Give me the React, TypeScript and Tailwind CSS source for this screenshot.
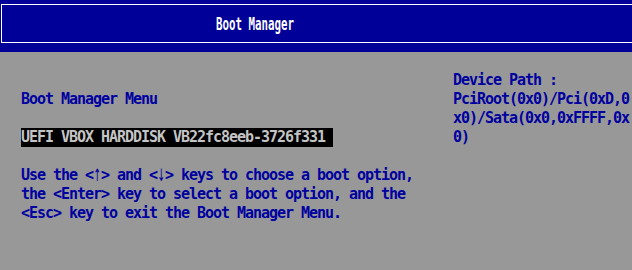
import React from "react";

function Row({ children, className = "" }: { children?: React.ReactNode; className?: string }) {
  return <div className={`h-[19px] leading-[19px] whitespace-pre ${className}`}>{children}</div>;
}

function Arrow({ c }: { c: string }) {
  return (
    <span className="inline-flex w-[8px] h-[19px] align-top justify-center overflow-visible tracking-normal font-normal font-['DejaVu_Sans','Noto_Sans',sans-serif] text-[17px] leading-[18px]">
      <span className="inline-block scale-x-[0.55]">{c}</span>
    </span>
  );
}

export default function App() {
  return (
    <div className="w-[632px] h-[270px] overflow-hidden bg-[#989898] text-[15px] font-bold tracking-[-1.03px] font-['DejaVu_Sans_Mono','Liberation_Mono',monospace]">
      <header className="h-[52px] bg-[#000098] pt-[4px] pl-[1px] overflow-hidden">
        <div className="h-[39px] w-[700px] border-t border-b border-l border-white">
          <div className="pt-[9px] pl-[214px]">
            <span className="inline-block origin-left scale-x-[0.6] text-[18px] leading-[18px] tracking-normal text-white whitespace-pre">
              Boot Manager
            </span>
          </div>
        </div>
      </header>
      <main className="flex pt-[19px] text-[#0000a0]">
        <section className="w-[453px] pl-[21px] shrink-0">
          <Row />
          <Row>Boot Manager Menu</Row>
          <Row />
          <Row>
            <span className="inline-block bg-black text-[#c4c4c4] pr-[8px]">UEFI VBOX HARDDISK VB22fc8eeb-3726f331</span>
          </Row>
          <Row />
          <Row>
            Use the &lt;<Arrow c="↑" />&gt; and &lt;<Arrow c="↓" />&gt; keys to choose a boot option,
          </Row>
          <Row>the &lt;Enter&gt; key to select a boot option, and the</Row>
          <Row>&lt;Esc&gt; key to exit the Boot Manager Menu.</Row>
        </section>
        <section className="flex-1">
          <Row>Device Path :</Row>
          <Row>PciRoot(0x0)/Pci(0xD,0</Row>
          <Row>x0)/Sata(0x0,0xFFFF,0x</Row>
          <Row>0)</Row>
        </section>
      </main>
    </div>
  );
}
